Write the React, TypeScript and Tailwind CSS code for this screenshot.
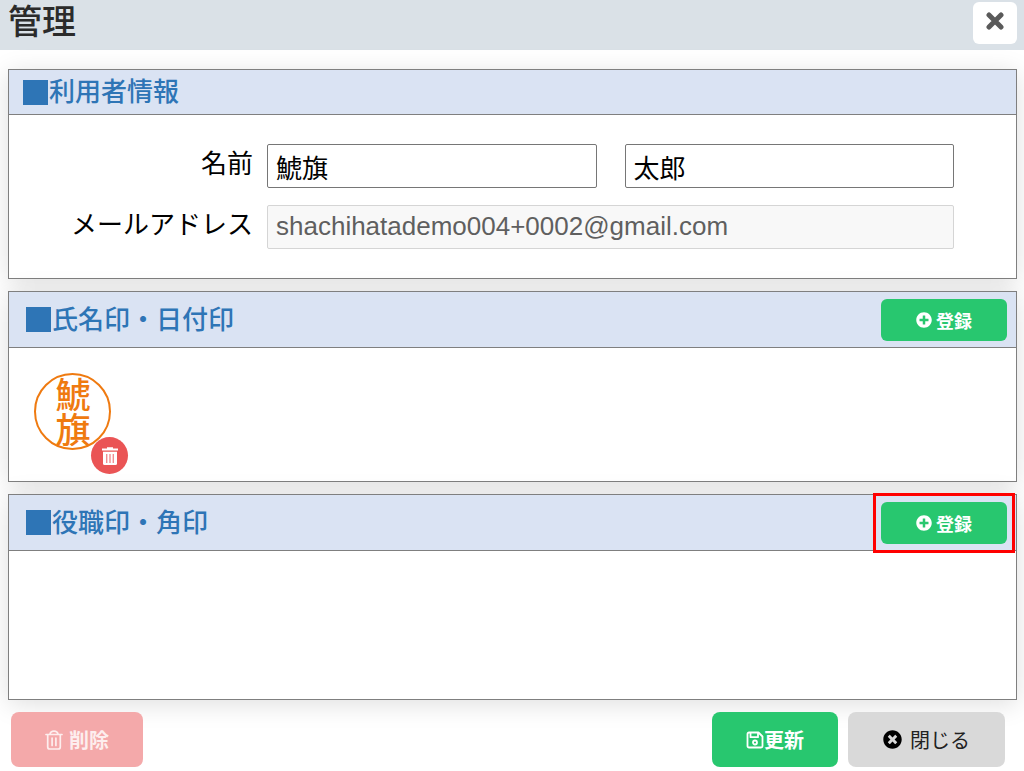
import type { ReactNode } from "react";
import { FaPlusCircle, FaTimesCircle } from "react-icons/fa";

function CloseIcon() {
  return (
    <svg
      viewBox="0 0 18 18"
      className="size-[18px]"
      stroke="currentColor"
      strokeWidth="5"
      strokeLinecap="round"
      aria-hidden="true"
    >
      <path d="M3 3l12 12M15 3L3 15" />
    </svg>
  );
}

function SaveIcon() {
  return (
    <svg
      viewBox="0 0 18 18"
      className="size-[18px]"
      fill="none"
      stroke="currentColor"
      strokeWidth="1.8"
      strokeLinejoin="round"
      aria-hidden="true"
    >
      <path d="M3 1.500h9.500l4 4V15a1.500 1.500 0 0 1-1.500 1.500H3A1.500 1.500 0 0 1 1.500 15V3A1.500 1.500 0 0 1 3 1.500z" />
      <path d="M4.500 1.800v4.400h7.500V1.800" />
      <circle cx="9" cy="11.500" r="2" />
    </svg>
  );
}

function TrashOutlineIcon() {
  return (
    <svg
      viewBox="0 0 18 20"
      className="h-5 w-[18px]"
      fill="none"
      stroke="currentColor"
      strokeWidth="1.7"
      strokeLinecap="round"
      strokeLinejoin="round"
      aria-hidden="true"
    >
      <path d="M1 4.5h16" />
      <path d="M5 4.2c.4-2 1.800-3 4-3s3.600 1 4 3" />
      <path d="M2.700 4.800v12.200c0 1.300.7 2 2 2h8.600c1.300 0 2-.7 2-2V4.800" />
      <path d="M7.100 8v7.500M10.900 8v7.500" />
    </svg>
  );
}

function TrashSolidIcon() {
  return (
    <svg viewBox="0 0 16 18" className="h-[18px] w-4" aria-hidden="true">
      <path d="M5 0.300h6v1.300h5v2H0v-2h5z" fill="#fff" />
      <path d="M1 4.800h14v11.700a1.500 1.500 0 0 1-1.500 1.500h-11A1.500 1.500 0 0 1 1 16.500z" fill="#fff" />
      <path d="M4.700 7v9M8 7v9M11.300 7v9" stroke="#f28e92" strokeWidth="1.400" />
    </svg>
  );
}

function RegisterButton({ label }: { label: string }) {
  return (
    <button
      type="button"
      aria-label={label}
      className="flex h-[42px] w-[126px] items-center justify-center gap-1 rounded-md bg-[#28c76f] text-lg font-bold text-white"
    >
      <FaPlusCircle className="size-4" />
      登録
    </button>
  );
}

type PanelProps = {
  title: string;
  action?: ReactNode;
  children?: ReactNode;
};

function Panel({ title, action, children }: PanelProps) {
  return (
    <section className="border border-[#7f7f7f] bg-white shadow-[0_4px_24px_rgba(0,0,0,0.13)]">
      <div
        className={`flex items-center justify-between border-b border-[#7f7f7f] bg-[#dae3f3] pr-[9px] ${
          action ? "h-[56px] pl-[17px]" : "h-[45px] pl-3.5"
        }`}
      >
        <h2 className="flex items-center gap-px text-[26px] leading-8 font-medium text-[#2e75b6]">
          <span className="size-[25px] bg-[#2e75b6]" />
          <span className="pb-1">{title}</span>
        </h2>
        {action}
      </div>
      {children}
    </section>
  );
}

export default function App() {
  return (
    <div className="bg-white font-['Noto_Sans_CJK_JP',sans-serif] text-[#222]">
      <header className="flex h-[50px] items-start justify-between bg-[#dae1e7] pr-[7px] pl-2">
        <h1 className="text-[34px] leading-10 font-medium text-[#2b2b2b]">管理</h1>
        <button
          type="button"
          aria-label="閉じる"
          className="mt-0.5 flex h-[42px] w-11 items-start justify-center rounded-md bg-white pt-2.5 text-[#5a5a5a]"
        >
          <CloseIcon />
        </button>
      </header>

      <main className="flex flex-col gap-3 pt-[19px] pr-[7px] pl-2">
        <Panel title="利用者情報">
          <form className="grid grid-cols-[244px_1fr] gap-x-3.5 gap-y-[17px] pt-[29px] pr-[62px] pb-[29px] text-[26px]">
            <label htmlFor="last-name" className="text-right leading-9 text-black">
              名前
            </label>
            <div className="grid grid-cols-2 gap-7">
              <input
                id="last-name"
                type="text"
                defaultValue="鯱旗"
                className="h-11 w-full min-w-0 rounded-xs border border-[#767676] bg-white px-2 text-black"
              />
              <input
                type="text"
                aria-label="名"
                defaultValue="太郎"
                className="h-11 w-full min-w-0 rounded-xs border border-[#767676] bg-white px-2 text-black"
              />
            </div>
            <label htmlFor="email" className="text-right leading-9 text-black">
              メールアドレス
            </label>
            <input
              id="email"
              type="email"
              disabled
              defaultValue="shachihatademo004+0002@gmail.com"
              className="h-11 w-full min-w-0 rounded-xs border border-[#d5d5d5] bg-[#f8f8f8] px-2 pb-0.5 font-['Liberation_Sans',sans-serif] text-[#5f5f5f]"
            />
          </form>
        </Panel>

        <Panel title="氏名印・日付印" action={<RegisterButton label="氏名印・日付印を登録" />}>
          <div className="flex h-[133px] items-start pt-[25px] pl-[25px]">
            <div className="relative">
              <div className="flex size-[77px] items-center justify-center rounded-full border-2 border-[#ef7a10] text-[35px] leading-10 font-medium text-[#ef7a10]">
                <span className="[writing-mode:vertical-rl]">鯱旗</span>
              </div>
              <button
                type="button"
                aria-label="印鑑を削除"
                className="absolute -right-[17px] -bottom-6 flex size-[37px] items-center justify-center rounded-full bg-[#ea5455]"
              >
                <TrashSolidIcon />
              </button>
            </div>
          </div>
        </Panel>

        <Panel
          title="役職印・角印"
          action={
            <div className="relative">
              <RegisterButton label="役職印・角印を登録" />
              <div className="pointer-events-none absolute -inset-x-2 -inset-y-[9px] border-3 border-[#ff0000]" />
            </div>
          }
        >
          <div className="h-[148px]" />
        </Panel>
      </main>

      <footer className="flex items-center gap-2.5 pt-3 pr-[19px] pb-1 pl-[11px] text-xl">
        <button
          type="button"
          disabled
          className="relative flex h-[55px] w-[132px] items-center justify-center gap-1.5 rounded-lg bg-[#f4a9aa] font-bold text-[#fdeeee]"
        >
          <TrashOutlineIcon />
          削除
        </button>
        <button
          type="button"
          className="relative ml-auto flex h-[55px] w-[126px] items-center justify-center rounded-lg bg-[#28c76f] font-bold text-white"
        >
          <SaveIcon />
          更新
        </button>
        <button
          type="button"
          className="relative flex h-[55px] w-[157px] items-center justify-center gap-2 rounded-lg bg-[#d9d9d9] text-[#222]"
        >
          <FaTimesCircle className="size-[19px] text-black" />
          閉じる
        </button>
      </footer>
    </div>
  );
}
